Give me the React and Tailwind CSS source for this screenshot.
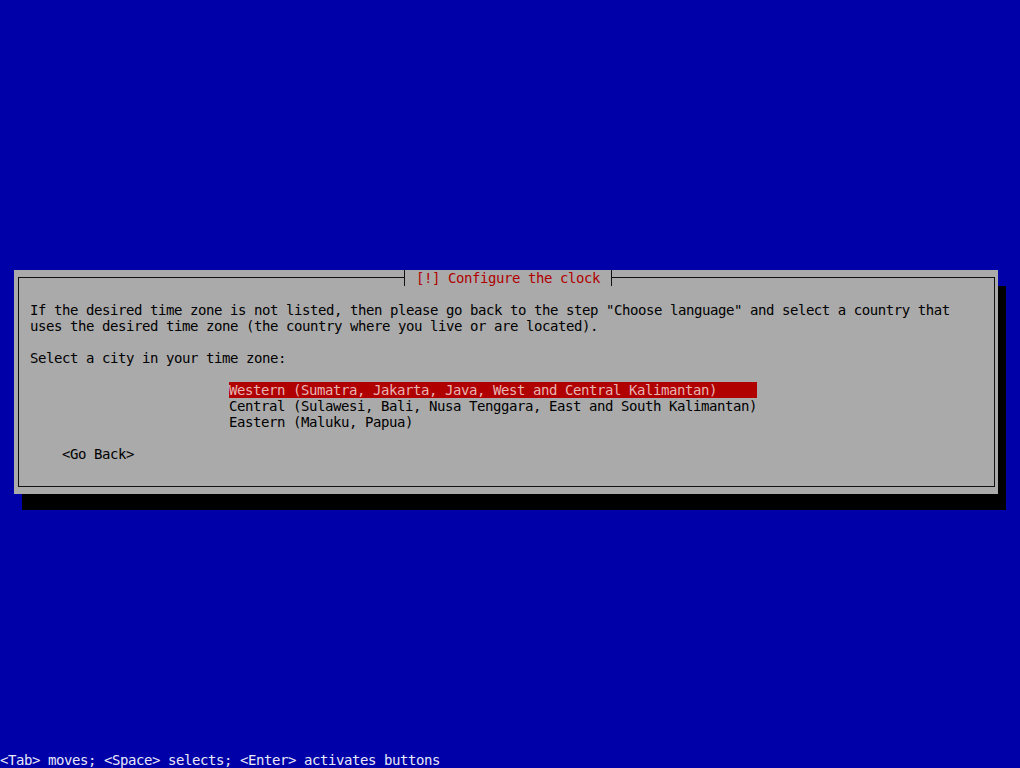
import React from 'react';

const cities = [
  'Western (Sumatra, Jakarta, Java, West and Central Kalimantan)',
  'Central (Sulawesi, Bali, Nusa Tenggara, East and South Kalimantan)',
  'Eastern (Maluku, Papua)',
];

const mono = "font-['DejaVu_Sans_Mono','Liberation_Mono',monospace] text-[14px] leading-4 tracking-[-0.43px] whitespace-pre";

export default function App() {
  const selected = 0;
  return (
    <div className={`w-[1020px] h-[768px] bg-[#0000a8] flex flex-col ${mono}`}>
      <div className="pt-[270px] pl-[14px]">
        <div className="relative w-[984px] h-[224px] bg-[#aaaaaa] shadow-[8px_16px_0_0_#000] pt-[7px] pl-[4px] pr-[3px] pb-[7px] flex">
          <div className="flex-1 border border-[#111] pt-[24px] pl-[11px] text-black">
            <div>If the desired time zone is not listed, then please go back to the step "Choose language" and select a country that</div>
            <div>uses the desired time zone (the country where you live or are located).</div>
            <div>&nbsp;</div>
            <div>Select a city in your time zone:</div>
            <div>&nbsp;</div>
            <div className="ml-[199px] flex flex-col items-start">
              {cities.map((c, i) => (
                <div
                  key={c}
                  className={i === selected ? 'w-[528px] bg-[#b00000] text-[#e8b4b4]' : 'w-[528px]'}
                >
                  {c}
                </div>
              ))}
            </div>
            <div>&nbsp;</div>
            <div className="ml-[32px]">&lt;Go Back&gt;</div>
          </div>
          <div className="absolute left-[390px] top-0 h-[16px] w-[208px] bg-[#aaaaaa] border-x border-[#111] pl-[11px] text-[#b00000]">
            [!] Configure the clock
          </div>
        </div>
      </div>
      <div className="mt-auto text-[#e8e8f8]">&lt;Tab&gt; moves; &lt;Space&gt; selects; &lt;Enter&gt; activates buttons</div>
    </div>
  );
}
